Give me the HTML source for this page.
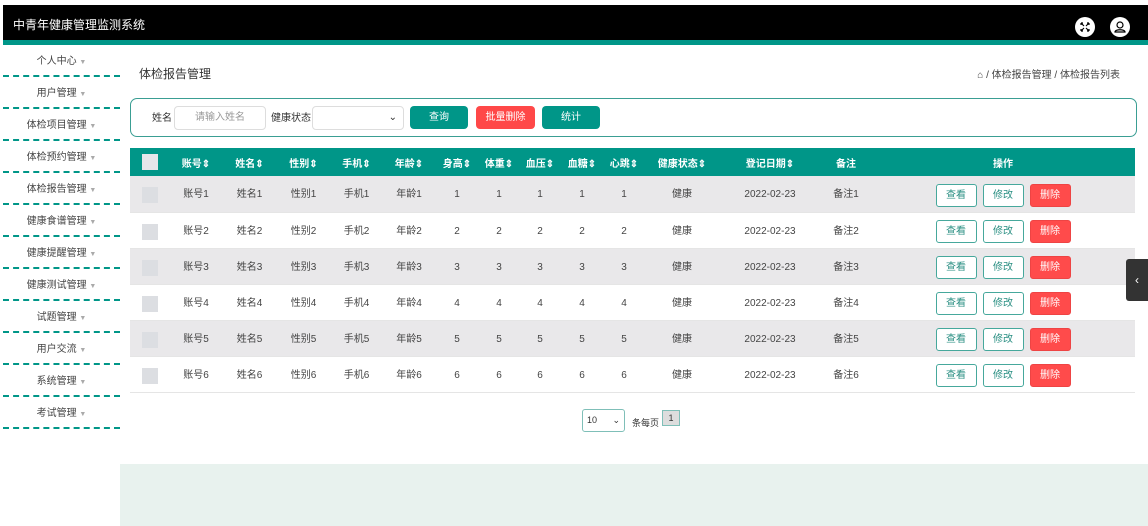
<!DOCTYPE html>
<html><head><meta charset="utf-8"><style>
*{margin:0;padding:0;box-sizing:border-box}
body{width:1148px;height:526px;overflow:hidden;background:#fff;font-family:"Liberation Sans","Noto Sans CJK SC",sans-serif;font-size:10px;color:#333;position:relative}
.top{position:absolute;left:3px;top:5px;width:1145px;height:35px;background:#000}
.top .t{position:absolute;left:10px;top:11px;color:#fff;font-size:12px}
.strip{position:absolute;left:3px;top:40px;width:1145px;height:5px;background:#009688}
.ic{position:absolute;top:17px;width:20px;height:20px;border-radius:50%;background:#fff}
.side{position:absolute;left:3px;top:45px;width:117px}
.side div{height:32px;border-bottom:2px dashed #009688;text-align:center;line-height:34px;font-size:10px;color:#444}
.side div span{color:#aaa;font-size:7px}
.title{position:absolute;left:139px;top:65px;font-size:12px;color:#333}
.bc{position:absolute;right:28px;top:66px;font-size:10px;color:#444}
.search{position:absolute;left:130px;top:98px;width:1007px;height:39px;border:1.5px solid #3a9e93;border-radius:7px}
.search .l{position:absolute;top:14px;line-height:12px}
.inp{position:absolute;top:7px;height:24px;border:1px solid #ddd;border-radius:4px;background:#fff;color:#999;text-align:center;line-height:22px}
.btn{position:absolute;top:7px;height:23px;border-radius:4px;color:#fff;text-align:center;line-height:23px}
table{position:absolute;left:130px;top:148px;width:1005px;border-collapse:collapse;font-size:10px}
th{background:#009688;color:#fff;height:28px;font-weight:bold;text-align:center;vertical-align:middle}
td{height:36px;text-align:center;color:#444;border-bottom:1px solid #e5e5e5;vertical-align:middle;line-height:12px;padding-top:3px}
tr.g td{background:#e9e8ea}
.cb{display:inline-block;width:16px;height:16px;background:#dcdee2;vertical-align:middle}
th .cb{background:#e5e6ea}
.b{display:inline-block;width:41px;height:23px;line-height:21px;border:1px solid #46a89c;border-radius:3px;background:#fff;color:#2a8f83;margin:0 3px;vertical-align:middle}
.b.r{background:#ff4b4b;border-color:#e44;color:#fff}
.sel{position:absolute;left:582px;top:409px;width:43px;height:23px;border:1px solid #7fbfb8;border-radius:3px;padding-left:4px;line-height:21px;font-size:9px}
.green{position:absolute;left:120px;top:464px;width:1028px;height:62px;background:#e8f2ee}
.tab{position:absolute;left:1126px;top:259px;width:22px;height:42px;background:#333;border-radius:3px 0 0 3px;color:#fff;text-align:center;line-height:42px;font-size:12px}
</style></head><body>
<div class="top"><span class="t">中青年健康管理监测系统</span></div>
<div class="strip"></div>
<div class="ic" style="left:1075px"><svg width="20" height="20"><path d="M6 6l3 3M14 6l-3 3M6 14l3-3M14 14l-3-3M6 6h2M6 6v2M14 6h-2M14 6v2M6 14h2M6 14v-2M14 14h-2M14 14v-2" stroke="#000" stroke-width="1.2" fill="none"/></svg></div>
<div class="ic" style="left:1110px"><svg width="20" height="20"><circle cx="10" cy="8" r="3" stroke="#000" fill="none" stroke-width="1.2"/><path d="M5 15c0-3 10-3 10 0z" stroke="#000" fill="none" stroke-width="1.2"/></svg></div>
<div class="side">
<div>个人中心 <span>▼</span></div><div>用户管理 <span>▼</span></div><div>体检项目管理 <span>▼</span></div><div>体检预约管理 <span>▼</span></div><div>体检报告管理 <span>▼</span></div><div>健康食谱管理 <span>▼</span></div><div>健康提醒管理 <span>▼</span></div><div>健康测试管理 <span>▼</span></div><div>试题管理 <span>▼</span></div><div>用户交流 <span>▼</span></div><div>系统管理 <span>▼</span></div><div>考试管理 <span>▼</span></div>
</div>
<div class="title">体检报告管理</div>
<div class="bc">⌂ / 体检报告管理 / 体检报告列表</div>
<div class="search">
<span class="l" style="left:21px">姓名</span>
<div class="inp" style="left:43px;width:92px">请输入姓名</div>
<span class="l" style="left:140px">健康状态</span>
<div class="inp" style="left:181px;width:92px;text-align:right;padding-right:6px;color:#333">⌄</div>
<div class="btn" style="left:279px;width:58px;background:#009688">查询</div>
<div class="btn" style="left:345px;width:59px;background:#ff4848">批量删除</div>
<div class="btn" style="left:411px;width:58px;background:#009688">统计</div>
</div>
<table>
<tr><th style="width:40px"><span class="cb"></span></th><th style="width:52px">账号⇕</th><th style="width:55px">姓名⇕</th><th style="width:53px">性别⇕</th><th style="width:53px">手机⇕</th><th style="width:52px">年龄⇕</th><th style="width:44px">身高⇕</th><th style="width:40px">体重⇕</th><th style="width:42px">血压⇕</th><th style="width:42px">血糖⇕</th><th style="width:42px">心跳⇕</th><th style="width:74px">健康状态⇕</th><th style="width:102px">登记日期⇕</th><th style="width:50px">备注</th><th>操作</th></tr>
<tr class="g"><td><span class="cb"></span></td><td>账号1</td><td>姓名1</td><td>性别1</td><td>手机1</td><td>年龄1</td><td>1</td><td>1</td><td>1</td><td>1</td><td>1</td><td>健康</td><td>2022-02-23</td><td>备注1</td><td><span class="b">查看</span><span class="b">修改</span><span class="b r">删除</span></td></tr>
<tr><td><span class="cb"></span></td><td>账号2</td><td>姓名2</td><td>性别2</td><td>手机2</td><td>年龄2</td><td>2</td><td>2</td><td>2</td><td>2</td><td>2</td><td>健康</td><td>2022-02-23</td><td>备注2</td><td><span class="b">查看</span><span class="b">修改</span><span class="b r">删除</span></td></tr>
<tr class="g"><td><span class="cb"></span></td><td>账号3</td><td>姓名3</td><td>性别3</td><td>手机3</td><td>年龄3</td><td>3</td><td>3</td><td>3</td><td>3</td><td>3</td><td>健康</td><td>2022-02-23</td><td>备注3</td><td><span class="b">查看</span><span class="b">修改</span><span class="b r">删除</span></td></tr>
<tr><td><span class="cb"></span></td><td>账号4</td><td>姓名4</td><td>性别4</td><td>手机4</td><td>年龄4</td><td>4</td><td>4</td><td>4</td><td>4</td><td>4</td><td>健康</td><td>2022-02-23</td><td>备注4</td><td><span class="b">查看</span><span class="b">修改</span><span class="b r">删除</span></td></tr>
<tr class="g"><td><span class="cb"></span></td><td>账号5</td><td>姓名5</td><td>性别5</td><td>手机5</td><td>年龄5</td><td>5</td><td>5</td><td>5</td><td>5</td><td>5</td><td>健康</td><td>2022-02-23</td><td>备注5</td><td><span class="b">查看</span><span class="b">修改</span><span class="b r">删除</span></td></tr>
<tr><td><span class="cb"></span></td><td>账号6</td><td>姓名6</td><td>性别6</td><td>手机6</td><td>年龄6</td><td>6</td><td>6</td><td>6</td><td>6</td><td>6</td><td>健康</td><td>2022-02-23</td><td>备注6</td><td><span class="b">查看</span><span class="b">修改</span><span class="b r">删除</span></td></tr>
</table>
<div class="sel">10 <span style="position:absolute;right:4px">⌄</span></div>
<span style="position:absolute;left:632px;top:416px;font-size:9px">条每页</span>
<div style="position:absolute;left:662px;top:410px;width:18px;height:16px;border:1px solid #7fbfb8;background:#ddd;text-align:center;line-height:14px;font-size:9px">1</div>
<div class="green"></div>
<div class="tab">‹</div>
</body></html>
